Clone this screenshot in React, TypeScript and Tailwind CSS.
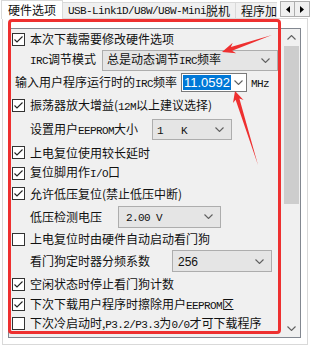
import React from 'react';

const M = ({ children }: { children: React.ReactNode }) => (
  <span className="font-['Liberation_Mono',monospace] text-[11px] tracking-[-0.6px]">{children}</span>
);

const Chevron = ({ up = false }: { up?: boolean }) => (
  <svg width="9" height="5" viewBox="0 0 9 5">
    <polyline
      points={up ? '0.5,4.5 4.5,0.5 8.5,4.5' : '0.5,0.5 4.5,4.5 8.5,0.5'}
      fill="none"
      stroke="#606060"
      strokeWidth="1.1"
    />
  </svg>
);

const Box = ({ checked }: { checked: boolean }) => (
  <svg width="13" height="13" viewBox="0 0 13 13" className="shrink-0">
    <rect x="0.5" y="0.5" width="12" height="12" fill="#fff" stroke="#333" />
    {checked && <polyline points="2.5,6.5 5,9 10.5,3.5" fill="none" stroke="#222" strokeWidth="1.1" />}
  </svg>
);

function Check({ checked = true, h, children }: { checked?: boolean; h: string; children: React.ReactNode }) {
  return (
    <div className={`flex items-center gap-[5px] pl-[3px] ${h}`}>
      <Box checked={checked} />
      <span className="whitespace-nowrap">{children}</span>
    </div>
  );
}

function Select({ w, h, children }: { w: string; h: string; children: React.ReactNode }) {
  return (
    <div className={`flex items-center justify-between border border-[#adadad] bg-[#e5e5e5] pl-[4px] pr-[7px] ${w} ${h}`}>
      <span className="whitespace-nowrap">{children}</span>
      <Chevron />
    </div>
  );
}

export default function App() {
  return (
    <div className="relative w-[310px] h-[348px] overflow-hidden bg-white text-[12px] leading-[14px] text-[#111] font-['Noto_Sans_CJK_SC',sans-serif]">
      {/* tabs */}
      <div className="relative z-10 flex h-[19px] items-end">
        <div className="flex flex-1 items-end overflow-hidden pl-[1px]">
          <div className="flex h-[19px] w-[62px] shrink-0 items-center justify-center border border-b-0 border-[#d9d9d9] bg-white">
            硬件选项
          </div>
          <div className="flex h-[17px] shrink-0 items-center border border-l-0 border-[#d9d9d9] bg-[#f0f0f0] px-[5px] whitespace-nowrap">
            <M>USB-Link1D/U8W/U8W-Mini</M>脱机
          </div>
          <div className="flex h-[17px] shrink-0 items-center border border-l-0 border-r-0 border-[#d9d9d9] bg-[#f0f0f0] pl-[5px] whitespace-nowrap">
            程序加
          </div>
        </div>
        <div className="mb-[2px] flex">
          <div className="flex h-[16px] w-[15px] items-center justify-center border border-[#adadad] bg-[#f0f0f0]">
            <svg width="4" height="7" viewBox="0 0 4 7"><polygon points="4,0 0,3.5 4,7" fill="#000" /></svg>
          </div>
          <div className="flex h-[16px] w-[15px] items-center justify-center border border-l-0 border-[#adadad] bg-[#f0f0f0]">
            <svg width="4" height="7" viewBox="0 0 4 7"><polygon points="0,0 4,3.5 0,7" fill="#000" /></svg>
          </div>
        </div>
      </div>

      {/* panel */}
      <div className="mx-[2px] mt-[-1px] h-[327px] border border-[#d9d9d9] bg-white pl-[5px] pr-[6px] pt-[9px]">
        <div className="flex h-[310px] border border-[#828790] bg-[#f0f0f0]">
          <div className="flex-1 overflow-hidden">
            <Check h="h-[20px]">本次下载需要修改硬件选项</Check>
            <div className="flex h-[22px] items-center">
              <span className="w-[93px] pl-[21px] whitespace-nowrap"><M>IRC</M>调节模式</span>
              <Select w="w-[176px]" h="h-[21px]"><span>总是动态调节<M>IRC</M>频率</span></Select>
            </div>
            <div className="flex h-[23px] items-center">
              <span className="w-[172px] pl-[6px] whitespace-nowrap">输入用户程序运行时的<M>IRC</M>频率</span>
              <div className="flex h-[19px] w-[66px] items-center justify-between border border-[#7a7a7a] bg-white pl-[1px] pr-[3px]">
                <span className="bg-[#0078d7] px-[1px] font-['Liberation_Sans',sans-serif] text-[13px] leading-[15px] text-white">11.0592</span>
                <Chevron />
              </div>
              <span className="pl-[4px]"><M>MHz</M></span>
            </div>
            <Check h="h-[23px]">振荡器放大增益(<M>12M</M>以上建议选择)</Check>
            <div className="flex h-[25px] items-center">
              <span className="w-[143px] pl-[21px] whitespace-nowrap">设置用户<M>EEPROM</M>大小</span>
              <Select w="w-[80px]" h="h-[21px]">
                <M>1</M>
                <span className="pl-[18px]"><M>K</M></span>
              </Select>
            </div>
            <Check h="h-[21px]">上电复位使用较长延时</Check>
            <Check h="h-[20px]">复位脚用作<M>I/O</M>口</Check>
            <Check h="h-[21px]">允许低压复位(禁止低压中断)</Check>
            <div className="flex h-[25px] items-center">
              <span className="w-[109px] pl-[21px] whitespace-nowrap">低压检测电压</span>
              <Select w="w-[103px]" h="h-[22px]"><span className="pl-[3px]"><M>2.00 V</M></span></Select>
            </div>
            <Check checked={false} h="h-[20px]">上电复位时由硬件自动启动看门狗</Check>
            <div className="flex h-[24px] items-center">
              <span className="w-[163px] pl-[21px] whitespace-nowrap">看门狗定时器分频系数</span>
              <Select w="w-[100px]" h="h-[22px]">
                <span className="pl-[1px] font-['Liberation_Sans',sans-serif] text-[12px]">256</span>
              </Select>
            </div>
            <Check h="h-[22px]">空闲状态时停止看门狗计数</Check>
            <Check h="h-[19px]">下次下载用户程序时擦除用户<M>EEPROM</M>区</Check>
            <Check checked={false} h="h-[19px]">下次冷启动时,<M>P3.2/P3.3</M>为<M>0/0</M>才可下载程序</Check>
          </div>

          {/* scrollbar */}
          <div className="flex w-[17px] flex-col">
            <div className="flex h-[17px] items-center justify-center">
              <Chevron up />
            </div>
            <div className="mx-[1px] h-[158px] bg-[#cdcdcd]" />
            <div className="flex-1" />
            <div className="flex h-[17px] items-center justify-center">
              <Chevron />
            </div>
          </div>
        </div>
      </div>

      {/* red annotation */}
      <div className="pointer-events-none absolute left-[8px] top-[19px] h-[315px] w-[273px] rounded-[4px] border-[3px] border-[#ee3030]" />
      <svg className="pointer-events-none absolute left-0 top-0" width="310" height="348" viewBox="0 0 310 348">
        <polygon
          points="272,35 230.9,47.05 232.7,42.8 222,52 236.1,53.2 232.1,50.85"
          fill="#ee3030"
        />
        <polygon
          points="258,165 235.6,99.7 233,103.1 235,91 243.5,99.9 239.4,98.5"
          fill="#ee3030"
        />
      </svg>
    </div>
  );
}
